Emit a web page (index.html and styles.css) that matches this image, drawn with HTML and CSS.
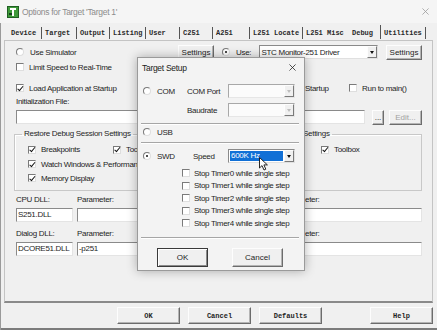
FILE: index.html
```html
<!DOCTYPE html>
<html lang="en">
<head>
  <meta charset="UTF-8">
  <title>Options for Target 'Target 1'</title>
  <link rel="stylesheet" href="styles.css">
</head>
<body>
  <div class="window">
    <!-- title bar -->
    <div class="titlebar">
      <svg class="app-icon" viewBox="0 0 12 12">
        <rect x="0.5" y="0.5" width="11" height="11" fill="#3f9a3a" stroke="#1f5e22"/>
        <rect x="3" y="2" width="6" height="2" fill="#fff"/>
        <rect x="5" y="4" width="2" height="6" fill="#fff"/>
        <rect x="2" y="7" width="3" height="2" fill="#14401a"/>
      </svg>
      <span class="title">Options for Target 'Target 1'</span>
      <svg class="close" viewBox="0 0 8 8"><path d="M0.5 0.5 L7.5 7.5 M7.5 0.5 L0.5 7.5" stroke="#9c9c9c" stroke-width="0.9"/></svg>
    </div>

    <!-- tabs -->
    <div class="tabs">
      <span class="tab">Device</span>
      <span class="tab">Target</span>
      <span class="tab">Output</span>
      <span class="tab">Listing</span>
      <span class="tab">User</span>
      <span class="tab">C251</span>
      <span class="tab">A251</span>
      <span class="tab">L251 Locate</span>
      <span class="tab">L251 Misc</span>
      <span class="tab active">Debug</span>
      <span class="tab">Utilities</span>
    </div>

    <!-- debug page -->
    <div class="panel">
      <div class="col">
        <div class="row r1">
          <label class="opt"><i class="rd"></i>Use Simulator</label>
          <button class="btn settings">Settings</button>
        </div>
        <div class="row r2"><label class="opt"><i class="cb"></i>Limit Speed to Real-Time</label></div>
        <div class="row r3"><label class="opt"><i class="cb on"></i>Load Application at Startup</label></div>
        <div class="row r4">Initialization File:</div>
        <div class="row r5"><span class="field grow"></span></div>
        <fieldset class="group">
          <legend>Restore Debug Session Settings</legend>
          <div class="group-grid">
            <label class="opt"><i class="cb on"></i>Breakpoints</label>
            <label class="opt"><i class="cb on"></i>Toolbox</label>
            <label class="opt wide"><i class="cb on"></i>Watch Windows &amp; Performance Analyzer</label>
            <label class="opt wide"><i class="cb on"></i>Memory Display</label>
          </div>
        </fieldset>
        <div class="dll lbl"><span>CPU DLL:</span><span>Parameter:</span></div>
        <div class="dll"><span class="field">S251.DLL</span><span class="field"></span></div>
        <div class="dll lbl second"><span>Dialog DLL:</span><span>Parameter:</span></div>
        <div class="dll"><span class="field">DCORE51.DLL</span><span class="field">-p251</span></div>
      </div>

      <!-- right half, mostly under the Target Setup dialog -->
      <div class="col">
        <div class="row r1">
          <label class="opt use"><i class="rd on"></i>Use:</label>
          <span class="select driver">STC Monitor-251 Driver<span class="arrow"></span></span>
          <button class="btn settings right">Settings</button>
        </div>
        <div class="row r2"></div>
        <div class="row r3">
          <label class="opt load"><i class="cb on"></i><span class="tail">Startup</span></label>
          <label class="opt"><i class="cb"></i>Run to main()</label>
        </div>
        <div class="row r4"></div>
        <div class="row r5">
          <span class="field grow"></span>
          <button class="btn dots">...</button>
          <button class="btn edit">Edit...</button>
        </div>
        <fieldset class="group">
          <legend><span class="tail-legend">n Settings</span></legend>
          <div class="group-grid">
            <label class="opt"><i class="cb on"></i></label>
            <label class="opt"><i class="cb on"></i>Toolbox</label>
            <label class="opt wide"><i class="cb on"></i></label>
            <label class="opt wide"><i class="cb on"></i></label>
          </div>
        </fieldset>
        <div class="dll lbl"><span></span><span class="tail-lbl">eter:</span></div>
        <div class="dll"><span class="field"></span><span class="field"></span></div>
        <div class="dll lbl second"><span></span><span class="tail-lbl">eter:</span></div>
        <div class="dll"><span class="field"></span><span class="field"></span></div>
      </div>
    </div>

    <!-- dialog buttons -->
    <div class="footer">
      <button class="btn big">OK</button>
      <button class="btn big">Cancel</button>
      <button class="btn big">Defaults</button>
      <button class="btn big help">Help</button>
    </div>

    <!-- Target Setup dialog -->
    <div class="modal">
      <div class="modal-head">
        <span>Target Setup</span>
        <svg class="modal-close" viewBox="0 0 8 8"><path d="M0.5 0.5 L7.5 7.5 M7.5 0.5 L0.5 7.5" stroke="#222" stroke-width="0.9"/></svg>
      </div>
      <div class="modal-body">
        <div class="m-grid first">
          <label class="opt"><i class="rd"></i>COM</label>
          <span>COM Port</span>
          <span class="select off"><span class="arrow"></span></span>
        </div>
        <div class="m-grid second">
          <span></span>
          <span>Baudrate</span>
          <span class="select off"><span class="arrow"></span></span>
        </div>
        <div class="sep s1"></div>
        <div class="m-row"><label class="opt"><i class="rd"></i>USB</label></div>
        <div class="sep s2"></div>
        <div class="m-grid swd">
          <label class="opt"><i class="rd on"></i>SWD</label>
          <span class="speed">Speed</span>
          <span class="select"><span class="picked">600K Hz</span><span class="arrow"></span></span>
        </div>
        <div class="timers">
          <label class="opt"><i class="cb"></i>Stop Timer0 while single step</label>
          <label class="opt"><i class="cb"></i>Stop Timer1 while single step</label>
          <label class="opt"><i class="cb"></i>Stop Timer2 while single step</label>
          <label class="opt"><i class="cb"></i>Stop Timer3 while single step</label>
          <label class="opt"><i class="cb"></i>Stop Timer4 while single step</label>
        </div>
        <div class="sep s3"></div>
        <div class="m-buttons">
          <button class="btn mbtn default">OK</button>
          <button class="btn mbtn">Cancel</button>
        </div>
      </div>
    </div>

    <svg class="cursor" viewBox="0 0 10 14">
      <path d="M0.5 0.5 L0.5 11 L3 8.6 L5 13 L6.8 12.2 L4.9 7.9 L8.4 7.9 Z" fill="#fff" stroke="#111" stroke-width="0.9" stroke-linejoin="round"/>
    </svg>
  </div>
</body>
</html>
```

FILE: styles.css
```css
* {
  box-sizing: border-box;
}
body {
  margin: 0;
  width: 437px;
  height: 330px;
  overflow: hidden;
  background: #f0f0f0;
  font-family: "Liberation Sans", Arial, sans-serif;
  font-size: 8px;
  letter-spacing: -0.3px;
  color: #1e1e1e;
}
.window {
  position: relative;
  width: 437px;
  height: 330px;
  background: #f0f0f0;
  box-shadow: inset 1px 0 #9a9a9a, inset 0 -2px #7c7c7c;
}

/* title bar */
.titlebar {
  display: flex;
  align-items: center;
  height: 23px;
  padding: 0 8px 0 7px;
  background: #f5f5f5;
}
.app-icon {
  width: 12px;
  height: 12px;
  margin-right: 3px;
}
.title {
  flex: 1;
  color: #8c8c8c;
  font-size: 8.5px;
}
.close {
  width: 7px;
  height: 7px;
}

/* tabs */
.tabs {
  display: flex;
  height: 17px;
  padding: 4px 0 0 8px;
  font-family: "Liberation Mono", "DejaVu Sans Mono", monospace;
  font-weight: bold;
  font-size: 7px;
  letter-spacing: 0;
  color: #2a2a2a;
}
.tab {
  flex: none;
  height: 12px;
  line-height: 12px;
  padding-left: 3px;
  border-right: 1px solid #555;
}
.tab:nth-child(1) { width: 34px; }
.tab:nth-child(2) { width: 35px; }
.tab:nth-child(3) { width: 33px; }
.tab:nth-child(4) { width: 36px; }
.tab:nth-child(5) { width: 34px; }
.tab:nth-child(6) { width: 33px; }
.tab:nth-child(7) { width: 37px; }
.tab:nth-child(8) { width: 53px; }
.tab:nth-child(9) { width: 42px; border-right: none; }
.tab:nth-child(10) { width: 36px; }
.tab:nth-child(11) { width: 45px; }
.tab.active {
  padding-left: 7px;
  height: 14px;
  margin-top: -2px;
  line-height: 16px;
}

/* page */
.panel {
  display: flex;
  gap: 8px;
  height: 263px;
  margin: 0 4px;
  padding: 3px 10px 0 11px;
  border: 1px solid #c4c4c4;
  border-bottom: 2px solid #8a8a8a;
}
.col {
  display: flex;
  flex-direction: column;
  width: 198px;
}
.col + .col {
  width: 200px;
}
.row {
  display: flex;
  align-items: center;
  flex: none;
}
.r1 { height: 16px; justify-content: space-between; }
.r2 { height: 14px; }
.r3 { height: 14px; margin-top: 7px; }
.r4 { height: 12px; }
.r5 { height: 14px; margin-top: 3px; }

.opt {
  display: flex;
  align-items: center;
  white-space: nowrap;
}
.cb,
.rd {
  position: relative;
  flex: none;
  width: 8px;
  height: 8px;
  margin-right: 5px;
  background: #fff;
  border: 1px solid;
  border-color: #7a7a7a #dedede #dedede #7a7a7a;
}
.rd {
  margin-right: 6px;
  border-radius: 50%;
}
.cb.on::after {
  content: "";
  position: absolute;
  left: 1.5px;
  top: -0.5px;
  width: 2px;
  height: 4.5px;
  border: solid #111;
  border-width: 0 1.6px 1.6px 0;
  transform: rotate(40deg);
}
.rd.on::after {
  content: "";
  position: absolute;
  left: 2px;
  top: 2px;
  width: 2px;
  height: 2px;
  border-radius: 50%;
  background: #111;
}

/* only the ends of these labels stick out past the dialog */
.tail {
  margin-left: 70px;
}
.tail-legend {
  margin-left: 65px;
}
.tail-lbl {
  padding-left: 22px;
}

.field {
  display: block;
  height: 14px;
  line-height: 12px;
  padding-left: 1px;
  background: #fff;
  border: 1px solid;
  border-color: #8a8a8a #e4e4e4 #e4e4e4 #8a8a8a;
  white-space: nowrap;
  overflow: hidden;
}
.grow {
  flex: 1;
}

.btn {
  display: flex;
  align-items: center;
  justify-content: center;
  padding: 0;
  font: inherit;
  color: inherit;
  background: #f0f0f0;
  border: 1px solid;
  border-color: #fdfdfd #6c6c6c #6c6c6c #fdfdfd;
  box-shadow: inset -1px -1px #b4b4b4;
}
.settings {
  width: 36px;
  height: 15px;
}
.settings.right {
  margin-left: 8px;
}
.dots {
  width: 12px;
  height: 15px;
  margin-left: 7px;
  align-items: flex-end;
  padding-bottom: 2px;
}
.edit {
  width: 33px;
  height: 15px;
  margin-left: 5px;
  color: #a2a2a2;
}

.use {
  width: 36px;
}
.load {
  width: 127px;
}

/* drop-down boxes */
.select {
  position: relative;
  display: flex;
  align-items: center;
  height: 14px;
  padding-left: 2px;
  background: #fff;
  border: 1px solid;
  border-color: #8a8a8a #e0e0e0 #e0e0e0 #8a8a8a;
  white-space: nowrap;
}
.driver {
  width: 119px;
}
.arrow {
  position: absolute;
  right: 0;
  top: 0;
  bottom: 0;
  width: 10px;
  background: #f0f0f0;
  border: 1px solid;
  border-color: #fdfdfd #7a7a7a #7a7a7a #fdfdfd;
}
.arrow::after {
  content: "";
  position: absolute;
  left: 2px;
  top: 4px;
  border-style: solid;
  border-width: 3px 2.5px 0 2.5px;
  border-color: #111 transparent transparent transparent;
}
.select.off {
  background: #fbfbfb;
  border-color: #a8a8a8 #e6e6e6 #e6e6e6 #a8a8a8;
}
.select.off .arrow::after {
  border-top-color: #bdbdbd;
}
.picked {
  display: block;
  width: 53px;
  height: 10px;
  line-height: 10px;
  margin-left: -1px;
  padding-left: 1px;
  color: #fff;
  background: #1170d6;
}

/* group boxes */
.group {
  flex: none;
  min-width: 0;
  margin: 5px 0 0 -2px;
  padding: 0 0 5px;
  border: 1px solid #c8c8c8;
  box-shadow: inset 1px 1px #fff;
}
.col + .col .group {
  margin-left: 0;
}
.group legend {
  margin-left: 7px;
  padding: 0 2px;
  line-height: 10px;
}
.group-grid {
  display: grid;
  grid-template-columns: 85px 1fr;
  grid-template-rows: 15px 14px 14px;
  align-items: center;
  margin-top: 3px;
  padding-left: 13px;
}
.group-grid .wide {
  grid-column: span 2;
}

/* dll rows */
.dll {
  display: grid;
  grid-template-columns: 57px 1fr;
  column-gap: 4px;
  flex: none;
  height: 14px;
  margin-top: 3px;
  white-space: nowrap;
}
.dll.lbl {
  height: 12px;
  margin-top: 2px;
  align-items: center;
}
.dll.lbl.second {
  margin-top: 5px;
}

/* bottom buttons */
.footer {
  display: flex;
  gap: 8px;
  padding: 4px 4px 0 117px;
}
.big {
  width: 63px;
  height: 17px;
  font-family: "Liberation Mono", "DejaVu Sans Mono", monospace;
  font-weight: bold;
  font-size: 7px;
  letter-spacing: 0;
}
.help {
  margin-left: auto;
}

/* Target Setup dialog */
.modal {
  position: absolute;
  left: 137px;
  top: 57px;
  width: 168px;
  height: 214px;
  background: #f3f3f3;
  border: 1px solid #9a9a9a;
  box-shadow: 0 0 10px rgba(0, 0, 0, 0.3);
}
.modal-head {
  display: flex;
  align-items: center;
  justify-content: space-between;
  height: 19px;
  padding: 0 8px 0 4px;
  font-size: 8.5px;
  color: #222;
}
.modal-close {
  width: 7px;
  height: 7px;
}
.modal-body {
  padding: 0 5px 0 3px;
}
.m-grid {
  display: grid;
  grid-template-columns: 46px 41px 67px;
  align-items: center;
  height: 14px;
}
.m-grid .opt,
.m-row .opt {
  padding-left: 2px;
}
.m-grid.first { margin-top: 7px; }
.m-grid.second { margin-top: 5px; }
.m-grid.swd { margin-top: 5px; }
.m-grid .select {
  width: 67px;
}
.speed {
  padding-left: 6px;
}
.m-row {
  display: flex;
  align-items: center;
  height: 14px;
}
.sep {
  height: 2px;
  border-top: 1px solid #a6a6a6;
  border-bottom: 1px solid #fff;
}
.s1 { margin-top: 6px; }
.s2 { margin-top: 3px; }
.s3 { margin-top: 7px; }
.timers {
  display: flex;
  flex-direction: column;
  margin-top: 4px;
  padding-left: 41px;
}
.timers .opt {
  height: 12.5px;
}
.timers .cb {
  margin-right: 4px;
}
.m-buttons {
  display: flex;
  gap: 24px;
  margin-top: 9px;
  padding-left: 16px;
}
.mbtn {
  width: 51px;
  height: 19px;
}
.mbtn.default {
  border: 1px solid #3a3a3a;
  box-shadow: inset 1px 1px #fff, inset -1px -1px #8a8a8a;
}

.cursor {
  position: absolute;
  left: 259px;
  top: 157px;
  width: 10px;
  height: 14px;
}
```
